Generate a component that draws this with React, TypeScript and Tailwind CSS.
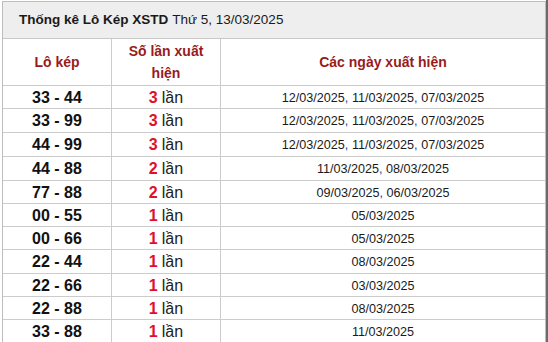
import React from "react";

const rows: [string, string, string[]][] = [
  ["33 - 44", "3", ["12/03/2025", "11/03/2025", "07/03/2025"]],
  ["33 - 99", "3", ["12/03/2025", "11/03/2025", "07/03/2025"]],
  ["44 - 99", "3", ["12/03/2025", "11/03/2025", "07/03/2025"]],
  ["44 - 88", "2", ["11/03/2025", "08/03/2025"]],
  ["77 - 88", "2", ["09/03/2025", "06/03/2025"]],
  ["00 - 55", "1", ["05/03/2025"]],
  ["00 - 66", "1", ["05/03/2025"]],
  ["22 - 44", "1", ["08/03/2025"]],
  ["22 - 66", "1", ["03/03/2025"]],
  ["22 - 88", "1", ["08/03/2025"]],
  ["33 - 88", "1", ["11/03/2025"]],
];

const heights = [
  "h-[23px]",
  "h-[24px]",
  "h-[24px]",
  "h-[24px]",
  "h-[23px]",
  "h-[23px]",
  "h-[23px]",
  "h-[24px]",
  "h-[23px]",
  "h-[23px]",
  "h-[24px]",
];

export default function App() {
  return (
    <div
      className="w-[548px] h-[342px] overflow-hidden bg-white flex"
      style={{ fontFamily: '"Liberation Sans", Arial, sans-serif' }}
    >
      <div className="ml-[2px] mt-[1px] w-[544px] border-l border-t border-r border-[#bdbdbd] shrink-0">
        <div className="h-[37px] bg-[#eeeeee] border-b border-[#c8c8c8] flex items-center pl-[16px] text-[13.5px] text-[#1a1a1a]">
          <span className="font-bold">Thống kê Lô Kép XSTD</span>
          <span className="ml-[4px]">Thứ 5, 13/03/2025</span>
        </div>
        <div className="grid grid-cols-[109px_109px_1fr] h-[47px] border-b border-[#cccccc] text-[14px] font-bold text-[#981b1b]">
          <div className="border-r border-[#cccccc] flex items-center justify-center">Lô kép</div>
          <div className="border-r border-[#cccccc] flex items-center justify-center text-center leading-[22px] px-[10px] pb-[1px]">
            Số lần xuất hiện
          </div>
          <div className="flex items-center justify-center">Các ngày xuất hiện</div>
        </div>
        {rows.map(([pair, n, dates], i) => (
          <div
            key={i}
            className={`grid grid-cols-[109px_109px_1fr] border-b border-[#cccccc] ${heights[i]}`}
          >
            <div className="border-r border-[#cccccc] flex items-center justify-center text-[16px] font-bold text-[#111111]">
              {pair}
            </div>
            <div className="border-r border-[#cccccc] flex items-center justify-center text-[16px] text-[#222222]">
              <span className="font-bold text-[#e0102a]">{n}</span>
              <span className="ml-[4px]">lần</span>
            </div>
            <div className="flex items-center justify-center text-[12.6px] text-[#1a1a1a]">
              {dates.map((d, j) => (
                <React.Fragment key={j}>
                  {j > 0 && <span className="text-[#3b3b8f] mr-[3.6px]">,</span>}
                  <span>{d}</span>
                </React.Fragment>
              ))}
            </div>
          </div>
        ))}
      </div>
      <div className="w-[2px] h-[342px] bg-[#6a6a6a] shrink-0" />
    </div>
  );
}
